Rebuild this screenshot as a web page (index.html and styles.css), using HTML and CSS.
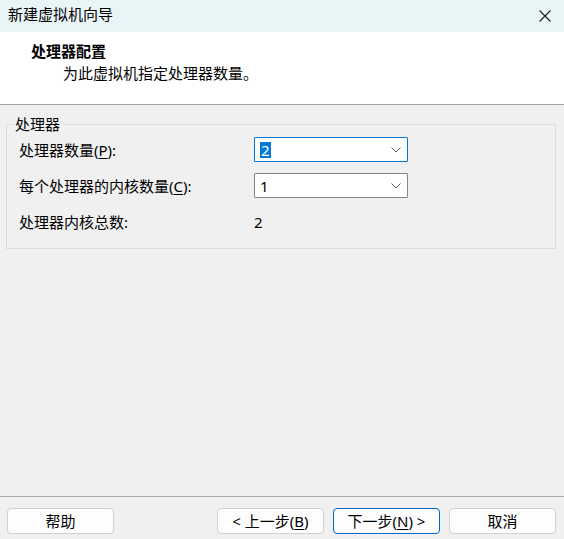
FILE: index.html
```html
<!DOCTYPE html>
<html lang="zh-CN">
<head>
<meta charset="utf-8">
<title>新建虚拟机向导</title>
<link rel="stylesheet" href="styles.css">
</head>
<body>
<div class="window">
  <div class="titlebar">
    <span class="title">新建虚拟机向导</span>
    <svg class="close" width="12" height="12" viewBox="0 0 12 12"><path d="M0.5 0.5 L11.5 11.5 M11.5 0.5 L0.5 11.5" stroke="#1a1a1a" stroke-width="1.1" fill="none"/></svg>
  </div>
  <div class="header">
    <div class="h-title">处理器配置</div>
    <div class="h-sub">为此虚拟机指定处理器数量。</div>
  </div>
  <div class="main">
    <fieldset class="group">
      <legend class="group-label">处理器</legend>
      <div class="grid">
        <div class="label">处理器数量(<u>P</u>):</div>
        <div class="combo focused"><span class="val sel">2</span><svg class="chev" width="10" height="6" viewBox="0 0 10 6"><path d="M0.5 0.5 L5 5 L9.5 0.5" stroke="#555" stroke-width="1" fill="none"/></svg></div>
        <div class="label">每个处理器的内核数量(<u>C</u>):</div>
        <div class="combo"><span class="val">1</span><svg class="chev" width="10" height="6" viewBox="0 0 10 6"><path d="M0.5 0.5 L5 5 L9.5 0.5" stroke="#555" stroke-width="1" fill="none"/></svg></div>
        <div class="label">处理器内核总数:</div>
        <div class="label value">2</div>
      </div>
    </fieldset>
  </div>
  <div class="footer">
    <button class="btn">帮助</button>
    <div class="spacer"></div>
    <button class="btn">&lt; 上一步(<u>B</u>)</button>
    <button class="btn primary">下一步(<u>N</u>) &gt;</button>
    <button class="btn">取消</button>
  </div>
</div>
</body>
</html>
```
FILE: styles.css
```css
* { box-sizing: border-box; }
html, body { margin: 0; padding: 0; }
body {
  font-family: "Noto Sans", "Noto Sans CJK SC", sans-serif;
  font-size: 15px;
  color: #000;
  background: #f0f0f0;
}
.window {
  width: 564px;
  height: 539px;
  display: flex;
  flex-direction: column;
  background: #f0f0f0;
}
.titlebar {
  height: 32px;
  flex: none;
  background: #e9f4f7;
  display: flex;
  align-items: center;
  justify-content: space-between;
  padding: 0 13px 4px 8px;
  line-height: 20px;
}
.close { display: block; margin-top: 3px; }
.header {
  height: 73px;
  flex: none;
  background: #fff;
  border-bottom: 1px solid #a0a0a0;
  padding: 9px 0 0 31px;
  line-height: 20px;
}
.h-title { font-weight: bold; }
.h-sub { margin-top: 2px; padding-left: 32px; }
.main {
  flex: 1;
  padding: 11px 8px 0 6px;
}
.group {
  margin: 0;
  border: 1px solid #dcdcdc;
  padding: 5px 12px 14px 12px;
  min-width: 0;
}
.group-label {
  padding: 0 2px;
  margin-left: -6px;
  line-height: 16px;
}
.grid {
  display: grid;
  grid-template-columns: 235px 154px;
  grid-auto-rows: 25px;
  row-gap: 11px;
}
.label {
  display: flex;
  align-items: center;
  line-height: 20px;
  white-space: nowrap;
}
u { text-underline-offset: 2px; }
.combo {
  background: #fff;
  border: 1px solid #858585;
  display: flex;
  align-items: center;
  justify-content: space-between;
  padding: 0 6px 0 5px;
  border-radius: 1px;
}
.combo.focused { border-color: #0078d4; }
.val { line-height: 16px; }
.val.sel { background: #0078d7; color: #fff; padding: 0 1px; }
.chev { display: block; }
.footer {
  height: 43px;
  flex: none;
  border-top: 1px solid #a8a8a8;
  display: flex;
  align-items: flex-start;
  gap: 9px;
  padding: 11px 8px 0 7px;
}
.spacer { flex: 1; }
.btn {
  width: 107px;
  height: 26px;
  font: inherit;
  color: #000;
  background: #fdfdfd;
  border: 1px solid #d0d0d0;
  border-radius: 4px;
  padding: 0;
  line-height: 20px;
}
.btn.primary { border-color: #0067c0; }
```
